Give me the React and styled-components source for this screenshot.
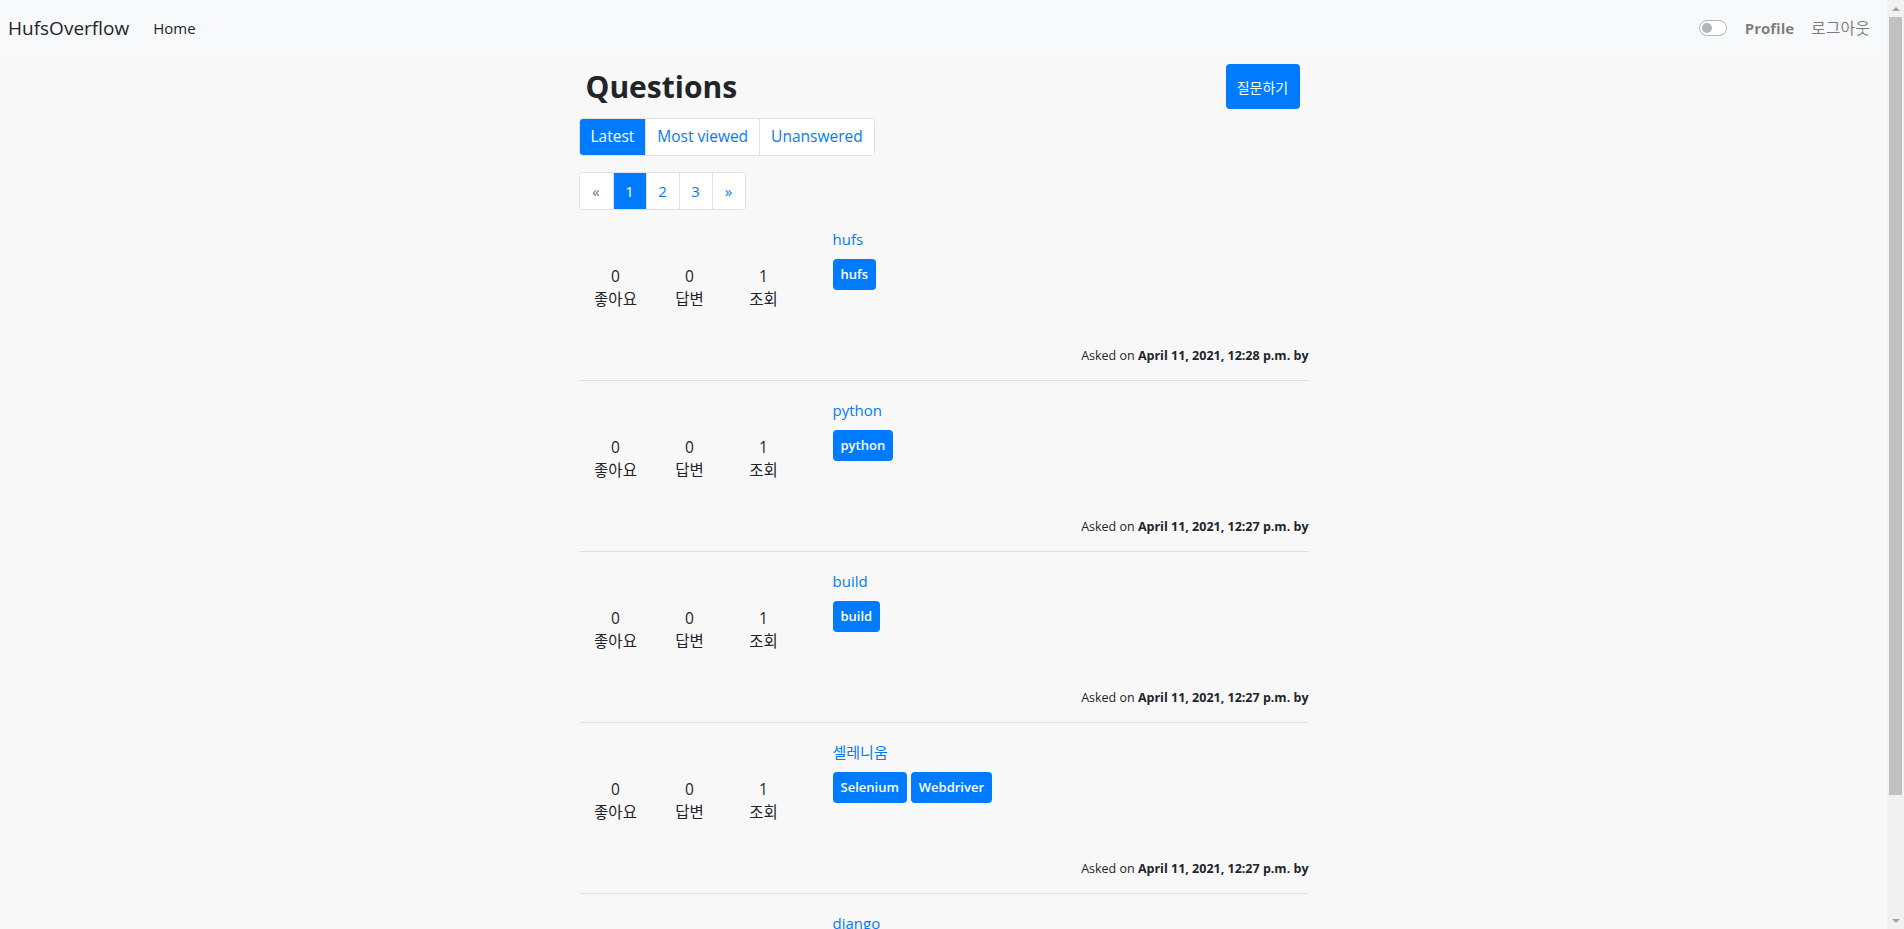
import React from 'react';
import styled, { createGlobalStyle } from 'styled-components';

const GlobalStyle = createGlobalStyle`
  body {
    margin: 0 17px 0 0;
    background: #f8f8f8;
    font-family: "Open Sans", "Noto Sans CJK KR", sans-serif;
    font-size: 16px;
    line-height: 1.5;
    color: #212529;
  }
  * {
    box-sizing: border-box;
  }
`;

const questions = [
  { title: 'hufs', tags: ['hufs'], date: 'April 11, 2021, 12:28 p.m.' },
  { title: 'python', tags: ['python'], date: 'April 11, 2021, 12:27 p.m.' },
  { title: 'build', tags: ['build'], date: 'April 11, 2021, 12:27 p.m.' },
  { title: '셀레니움', tags: ['Selenium', 'Webdriver'], date: 'April 11, 2021, 12:27 p.m.' },
  { title: 'django', tags: ['django'], date: 'April 11, 2021, 12:26 p.m.' },
];

const App = () => {
  return (
    <>
      <GlobalStyle />
      <Navbar>
        <Brand href="#">HufsOverflow</Brand>
        <NavLink href="#">Home</NavLink>
        <NavRight>
          <Switch />
          <ProfileLink href="#">Profile</ProfileLink>
          <LogoutLink href="#">로그아웃</LogoutLink>
        </NavRight>
      </Navbar>
      <Main>
        <Header>
          <Heading>Questions</Heading>
          <AskButton>질문하기</AskButton>
        </Header>
        <Tabs>
          <Tab active>Latest</Tab>
          <Tab>Most viewed</Tab>
          <Tab>Unanswered</Tab>
        </Tabs>
        <Pagination>
          <PageItem disabled>«</PageItem>
          <PageItem active>1</PageItem>
          <PageItem>2</PageItem>
          <PageItem>3</PageItem>
          <PageItem>»</PageItem>
        </Pagination>
        {questions.map((q, i) => (
          <QuestionRow key={i}>
            <Stats>
              <Stat><span>0</span><span>좋아요</span></Stat>
              <Stat><span>0</span><span>답변</span></Stat>
              <Stat><span>1</span><span>조회</span></Stat>
            </Stats>
            <Body>
              <Title href="#">{q.title}</Title>
              <Tags>
                {q.tags.map(t => <Tag key={t}>{t}</Tag>)}
              </Tags>
              <Asked>Asked on <b>{q.date} by</b></Asked>
            </Body>
          </QuestionRow>
        ))}
      </Main>
      <ScrollTrack>
        <ScrollArrow />
        <ScrollThumb />
        <ScrollArrow down />
      </ScrollTrack>
    </>
  );
};

const Navbar = styled.nav`
  height: 56px;
  background: #f8f9fa;
  display: flex;
  align-items: center;
  padding: 0 17px 0 8px;
`;

const Brand = styled.a`
  font-size: 19px;
  color: #212529;
  text-decoration: none;
  margin-right: 24px;
`;

const NavLink = styled.a`
  font-size: 15px;
  color: #212529;
  text-decoration: none;
`;

const NavRight = styled.div`
  margin-left: auto;
  display: flex;
  align-items: center;
`;

const Switch = styled.span`
  position: relative;
  width: 28px;
  height: 16px;
  border: 1px solid #adb5bd;
  border-radius: 8px;
  background: #fff;
  margin-right: 18px;
  &::after {
    content: '';
    position: absolute;
    left: 2px;
    top: 2px;
    width: 10px;
    height: 10px;
    border-radius: 50%;
    background: #adb5bd;
  }
`;

const ProfileLink = styled.a`
  font-size: 15px;
  font-weight: 700;
  color: rgba(0, 0, 0, 0.5);
  text-decoration: none;
  margin-right: 17px;
`;

const LogoutLink = styled.a`
  font-size: 16px;
  color: rgba(0, 0, 0, 0.5);
  text-decoration: none;
`;

const Main = styled.main`
  width: 730px;
  margin: 0 auto;
`;

const Header = styled.div`
  display: flex;
  align-items: center;
  justify-content: space-between;
  height: 45px;
  margin-top: 8px;
  padding: 0 9px 0 7px;
`;

const Heading = styled.h2`
  margin: 0;
  font-size: 30px;
  font-weight: 700;
  line-height: 1.2;
`;

const AskButton = styled.button`
  height: 45px;
  width: 74px;
  padding: 0;
  border: none;
  border-radius: 4px;
  background: #007bff;
  color: #fff;
  font-family: inherit;
  font-size: 14px;
`;

const Tabs = styled.div`
  display: inline-flex;
  margin-top: 9px;
  border: 1px solid #dee2e6;
  border-radius: 4px;
  overflow: hidden;
  background: #fff;
`;

const Tab = styled.a`
  height: 36px;
  display: flex;
  align-items: center;
  padding: 0 11px;
  font-size: 15.5px;
  color: ${p => (p.active ? '#fff' : '#007bff')};
  background: ${p => (p.active ? '#007bff' : '#fff')};
  & + & {
    border-left: 1px solid #dee2e6;
  }
`;

const Pagination = styled.div`
  display: flex;
  width: fit-content;
  margin-top: 16px;
  border: 1px solid #dee2e6;
  border-radius: 4px;
  overflow: hidden;
  background: #fff;
`;

const PageItem = styled.a`
  width: 33px;
  height: 36px;
  display: flex;
  align-items: center;
  justify-content: center;
  font-size: 15px;
  color: ${p => (p.active ? '#fff' : p.disabled ? '#6c757d' : '#007bff')};
  background: ${p => (p.active ? '#007bff' : '#fff')};
  & + & {
    border-left: 1px solid #dee2e6;
  }
`;

const QuestionRow = styled.div`
  display: grid;
  grid-template-columns: 254px 1fr;
  min-height: 171px;
  padding-bottom: 15px;
  border-bottom: 1px solid #dee2e6;
`;

const Stats = styled.div`
  align-self: center;
  display: grid;
  grid-template-columns: repeat(3, 74px);
`;

const Stat = styled.div`
  display: flex;
  flex-direction: column;
  align-items: center;
  font-size: 15.5px;
  line-height: 23px;
`;

const Body = styled.div`
  display: flex;
  flex-direction: column;
  padding-top: 17px;
`;

const Title = styled.a`
  color: #007bff;
  text-decoration: none;
  font-size: 15px;
  line-height: 24px;
`;

const Tags = styled.div`
  display: flex;
  gap: 4px;
  margin-top: 8px;
`;

const Tag = styled.span`
  height: 31px;
  display: flex;
  align-items: center;
  padding: 0 8px;
  border-radius: 4px;
  background: #007bff;
  color: #fff;
  font-size: 13px;
  font-weight: 600;
`;

const Asked = styled.div`
  margin-top: auto;
  text-align: right;
  font-size: 12.5px;
  line-height: 18px;
  b {
    font-weight: 700;
  }
`;

const ScrollTrack = styled.div`
  position: fixed;
  top: 0;
  right: 0;
  width: 17px;
  height: 100vh;
  background: #f1f1f1;
  display: flex;
  flex-direction: column;
  align-items: center;
`;

const ScrollArrow = styled.div`
  width: 17px;
  height: 17px;
  display: flex;
  align-items: center;
  justify-content: center;
  margin-top: ${p => (p.down ? 'auto' : '0')};
  &::before {
    content: '';
    border-left: 4px solid transparent;
    border-right: 4px solid transparent;
    ${p => (p.down ? 'border-top: 4px solid #a3a3a3;' : 'border-bottom: 4px solid #a3a3a3;')}
  }
`;

const ScrollThumb = styled.div`
  width: 13px;
  height: 778px;
  background: #c1c1c1;
`;

export default App;
